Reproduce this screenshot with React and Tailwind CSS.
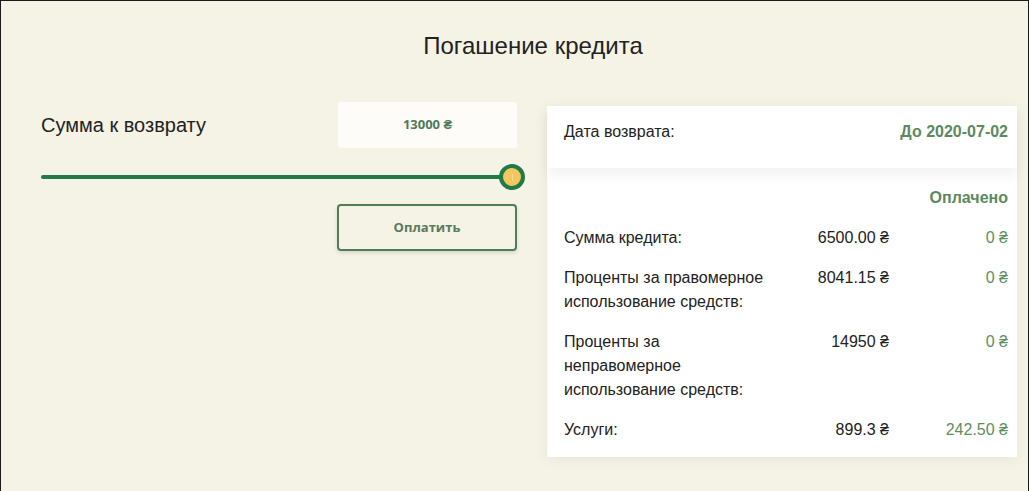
import React from 'react';

const rows = [
  { label: 'Сумма кредита:', amount: '6500.00 ₴', paid: '0 ₴' },
  { label: 'Проценты за правомерное использование средств:', amount: '8041.15 ₴', paid: '0 ₴' },
  { label: 'Проценты за неправомерное использование средств:', amount: '14950 ₴', paid: '0 ₴' },
  { label: 'Услуги:', amount: '899.3 ₴', paid: '242.50 ₴' },
];

const App = () => {
  return (
    <div className="h-[491px] w-full overflow-hidden border border-b-0 border-[#1a1a1a] bg-[#f5f2e6] font-['Liberation_Sans',Arial,sans-serif] text-[#222]">
      {/* Title */}
      <h1 className="pt-[31px] pl-[37px] text-center text-[24px] leading-[28px] font-normal">Погашение кредита</h1>

      <div className="mt-[42px] flex items-start gap-[30px] pl-[40px]">
        {/* Left: amount + slider */}
        <div className="w-[476px] shrink-0">
          <div className="flex h-[46px] items-center justify-between">
            <span className="text-[20px] leading-[26px]">Сумма к возврату</span>
            <div className="flex h-[46px] w-[179px] items-center justify-center rounded-[3px] bg-[#fdfcf8] font-['Open_Sans',sans-serif] text-[13px] font-bold text-[#4f7a58]">
              13000 ₴
            </div>
          </div>

          <div className="relative mt-[16px] flex h-[26px] w-[471px] items-center">
            <div className="h-[4px] w-full rounded-full bg-[#1f7a45]" />
            <div className="absolute right-[-13px] top-0 flex h-[26px] w-[26px] items-center justify-center rounded-full border-[4px] border-[#1f7a45] bg-[#f2c760]">
              <div className="h-[7px] w-px bg-[#f6d98c]" />
            </div>
          </div>

          <button className="mt-[14px] ml-auto flex h-[47px] w-[180px] items-center justify-center rounded-[4px] border-2 border-[#4f7d57] bg-[#f5f2e6] font-['Open_Sans',sans-serif] text-[13px] font-bold text-[#5a7a5e] shadow-[0_2px_4px_rgba(0,0,0,0.12)]">
            Оплатить
          </button>
        </div>

        {/* Right: details card */}
        <div className="mt-[4px] w-[470px] shrink-0 bg-white text-[16px] leading-[24px] shadow-[0_2px_14px_rgba(0,0,0,0.06)]">
          <div className="relative z-10 flex justify-between bg-white pt-[14px] pb-[24px] pl-[17px] pr-[9px] shadow-[0_8px_12px_rgba(0,0,0,0.05)]">
            <span>Дата возврата:</span>
            <span className="font-bold text-[#5b8a60]">До 2020-07-02</span>
          </div>

          <div className="pt-[18px] pb-[15px] pl-[17px] pr-[9px]">
            <div className="text-right font-bold text-[#5b8a60]">Оплачено</div>
            <div className="mt-[16px] flex flex-col gap-[16px]">
              {rows.map((row) => (
                <div key={row.label} className="grid grid-cols-[208px_117px_119px]">
                  <span>{row.label}</span>
                  <span className="text-right">{row.amount}</span>
                  <span className="text-right text-[#5e8e62]">{row.paid}</span>
                </div>
              ))}
            </div>
          </div>
        </div>
      </div>
    </div>
  );
};

export default App;
